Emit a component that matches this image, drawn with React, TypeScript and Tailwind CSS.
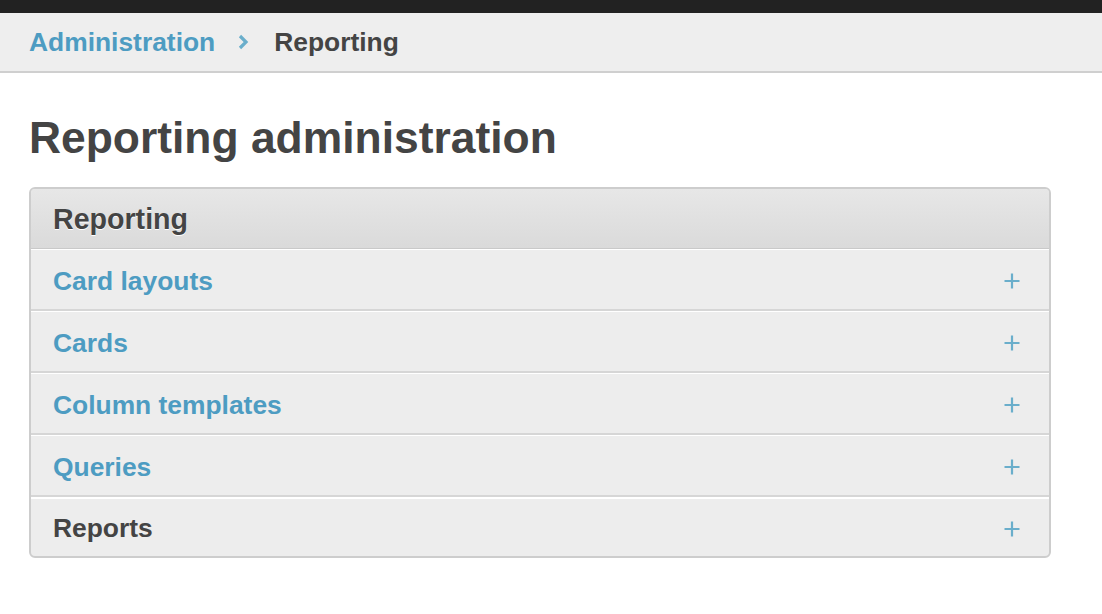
import React from "react";

const Plus = () => (
  <svg width="16" height="16" viewBox="0 0 16 16" className="shrink-0">
    <path d="M8 0.5V15.5M0.5 8H15.5" stroke="#6aaecb" strokeWidth="2.2" fill="none" />
  </svg>
);

const rows = [
  { label: "Card layouts", link: true },
  { label: "Cards", link: true },
  { label: "Column templates", link: true },
  { label: "Queries", link: true },
  { label: "Reports", link: false },
];

export default function App() {
  return (
    <div
      className="min-h-[614px] w-full bg-white text-[#444]"
      style={{ fontFamily: '"Liberation Sans", Arial, sans-serif' }}
    >
      <div className="h-[13px] bg-[#222]" />
      <div className="flex h-[60px] items-center border-b-2 border-[#cfcfcf] bg-[#eeeeee] pl-[29px]">
        <a className="text-[26.4px] font-bold leading-none text-[#4d9cc2]">Administration</a>
        <svg width="12" height="16" viewBox="0 0 12 16" className="ml-[22px] mr-[25px]">
          <path d="M3 2L9 8L3 14" stroke="#6aaecb" strokeWidth="3.2" fill="none" />
        </svg>
        <span className="text-[26.4px] font-bold leading-none text-[#444]">Reporting</span>
      </div>
      <h1 className="ml-[29px] mt-[43px] mb-[27px] text-[44.4px] font-bold leading-[44px] text-[#444]">
        Reporting administration
      </h1>
      <div className="ml-[29px] w-[1022px] overflow-hidden rounded-[6px] border-2 border-[#cdcdcd] bg-[#ededed]">
        <div className="flex h-[60px] items-center border-b border-[#c9c9c9] bg-gradient-to-b from-[#e7e7e7] to-[#dadada] pl-[22px] pt-[2px]">
          <span className="text-[28.6px] font-bold leading-none text-[#444] [text-shadow:0_1px_0_#fff]">
            Reporting
          </span>
        </div>
        {rows.map((r, i) => (
          <div
            key={r.label}
            className={
              i < rows.length - 1
                ? "flex h-[62px] items-center justify-between border-t border-b-2 border-t-white border-b-[#d6d6d6] pl-[22px] pr-[29px] pt-[3px]"
                : "flex h-[59px] items-center justify-between border-t-2 border-t-white pl-[22px] pr-[29px] pt-[2px]"
            }
          >
            <span
              className={
                r.link
                  ? "text-[26.4px] font-bold leading-none text-[#4d9cc2]"
                  : "text-[26.4px] font-bold leading-none text-[#444]"
              }
            >
              {r.label}
            </span>
            <Plus />
          </div>
        ))}
      </div>
    </div>
  );
}
